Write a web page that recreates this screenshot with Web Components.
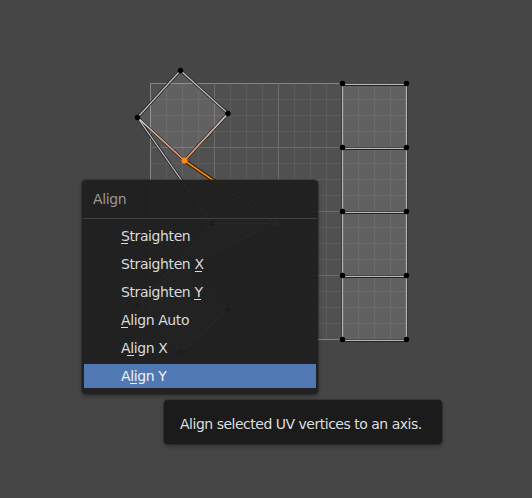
<!DOCTYPE html>
<html lang="en"><head><meta charset="utf-8"><title>UV Editor</title>
<style>html,body{margin:0;width:532px;height:498px;overflow:hidden;background:#464646}</style></head>
<body>
<uv-editor>
<uv-menu heading="Align">
<menu-entry key="0">Straighten</menu-entry>
<menu-entry key="11">Straighten X</menu-entry>
<menu-entry key="12">Straighten Y</menu-entry>
<menu-entry key="0">Align Auto</menu-entry>
<menu-entry key="1">Align X</menu-entry>
<menu-entry key="2" active>Align Y</menu-entry>
</uv-menu>
<tool-tip>Align selected UV vertices to an axis.</tool-tip>
</uv-editor>
<script>
customElements.define('uv-canvas', class extends HTMLElement {
  connectedCallback() {
    const root = this.attachShadow({mode: 'open'});
    let grid = '';
    for (let i = 0; i <= 16; i++) {
      const p = i * 16, c = i % 16 === 0 ? '#858585' : i % 4 === 0 ? '#6c6c6c' : '#5c5c5c';
      const s = `<path stroke="${c}" d="M${150.5 + p} 83V340M150 ${83.5 + p}H407"/>`;
      grid = i % 4 === 0 ? grid + s : s + grid;
    }
    const faces = ['180.5 70.5 228 113.5 184.5 160.5 137.5 117.5', '137.5 117.5 184.5 160.5 276 223.5 212 223.5',
      '212 223.5 276 223.5 181 266 137.5 306', '181 266 228 309.5 181 352 137.5 306'];
    const edges = 'M184.5 160.5L137.5 117.5L180.5 70.5L228 113.5L184.5 160.5M137.5 117.5L212 223.5H276L181 266L228 309.5L181 352L137.5 306L212 223.5M181 266L137.5 306';
    const right = 'M342.5 83.5V339.5M406.5 83.5V339.5';
    const rows = [84.5, 148.5, 212.5, 276.5, 340.5];
    const pts = [[180.5,70.5],[228,113.5],[137.5,117.5],[212,223.5],[137.5,306],[228,309.5],[181,352]];
    for (let y = 0; y < 5; y++) pts.push([342.5, 83.5 + y * 64], [406.5, 83.5 + y * 64]);
    root.innerHTML = `<style>:host{display:block;width:532px;height:498px}svg{display:block}</style>
    <svg width="532" height="498" fill="none">
      <defs>
        <linearGradient id="a" gradientUnits="userSpaceOnUse" x1="184.5" y1="160.5" x2="137.5" y2="117.5"><stop stop-color="#ee8048"/><stop offset="1" stop-color="#c4c4c4"/></linearGradient>
        <linearGradient id="b" gradientUnits="userSpaceOnUse" x1="184.5" y1="160.5" x2="228" y2="113.5"><stop stop-color="#ee8048"/><stop offset="1" stop-color="#c4c4c4"/></linearGradient>
      </defs>
      <path fill="#505050" d="M150 83h257v257H150z"/>${grid}
      <path fill="#fff" fill-opacity=".1" d="M342 83h65v257h-65z"/>
      ${faces.map((f, i) => `<polygon points="${f}" fill="#fff" fill-opacity="${i === 1 ? .03 : .1}"/>`).join('')}
      <path d="${edges}" stroke="#242424" stroke-width="3"/>
      <path d="${edges}" stroke="#bcbcbc" stroke-width="1.3"/>
      <path d="M184.5 160.5L137.5 117.5" stroke="url(#a)" stroke-width="1.3"/>
      <path d="M184.5 160.5L228 113.5" stroke="url(#b)" stroke-width="1.3"/>
      <path d="M184.5 160.5L276 223.5" stroke="#281600" stroke-width="3.6"/>
      <path d="M184.5 160.5L276 223.5" stroke="#f28a14" stroke-width="1.6"/>
      <path d="M341.5 84V340M407.5 84V340" stroke="#3a3a3a"/>
      <path d="M343.5 84V340M405.5 84V340" stroke="#6c6c6c"/>
      <path d="${right}" stroke="#b4b4b4"/>
      ${rows.map(y => `<path d="M342 ${y + 1}H407" stroke="#222"/><path d="M342 ${y - 1}H407" stroke="#484848"/><path d="M342 ${y}H407" stroke="#b8b8b8"/>`).join('')}
      ${pts.map(p => `<circle cx="${p[0]}" cy="${p[1]}" r="2.7" fill="#000"/>`).join('')}
      <circle cx="184.5" cy="160.5" r="3" fill="#ff8a14"/><circle cx="276" cy="223.5" r="3" fill="#ff8a14"/>
    </svg>`;
  }
});
customElements.define('uv-menu', class extends HTMLElement {
  connectedCallback() {
    this.attachShadow({mode: 'open'}).innerHTML = `<style>
      :host{display:block;box-sizing:border-box;width:236px;height:214px;padding:0 2px;background:rgba(31,31,31,.945);border-radius:4px;box-shadow:0 0 0 1px rgba(24,24,24,.3),0 2px 4px rgba(0,0,0,.35);color:#dadada}
      header{height:38px;line-height:38px;padding-left:10px;margin:0 -1px 4px;color:#989898;border-bottom:1px solid #424242}
      nav{display:flex;flex-direction:column;gap:4px;padding-top:1px}</style>
      <header>${this.getAttribute('heading')}</header><nav><slot></slot></nav>`;
  }
});
customElements.define('menu-entry', class extends HTMLElement {
  connectedCallback() {
    const k = +this.getAttribute('key'), t = this.textContent;
    const x = {0: 0, 1: 6, 2: 9, 11: 74, 12: 73}[k];
    this.attachShadow({mode: 'open'}).innerHTML = `<style>
      :host{display:block;height:24px;line-height:24px;padding-left:37px;white-space:pre}
      :host([active]){background:#5079b4;color:#f0f0f0}
      span{display:inline-block;min-width:90px;background:linear-gradient(currentColor,currentColor) 0 19px/7px 1px no-repeat}
      </style><span style="background-position-x:${x}px">${t}</span>`;
  }
});
customElements.define('tool-tip', class extends HTMLElement {
  connectedCallback() {
    this.attachShadow({mode: 'open'}).innerHTML = `<style>
      :host{display:block;box-sizing:border-box;width:278px;height:44px;line-height:48px;padding-left:16px;white-space:nowrap;background:#1b1b1c;border-radius:4px;color:#dedede;letter-spacing:-.49px;box-shadow:0 0 0 1px rgba(24,24,24,.3),0 2px 4px rgba(0,0,0,.35)}
      </style><slot></slot>`;
  }
});
customElements.define('uv-editor', class extends HTMLElement {
  connectedCallback() {
    this.attachShadow({mode: 'open'}).innerHTML = `<style>
      :host{display:block;position:relative;width:532px;height:498px;font:14px "DejaVu Sans",sans-serif;letter-spacing:-.4px}
      ::slotted(uv-menu){position:absolute;left:82px;top:180px}
      ::slotted(tool-tip){position:absolute;left:164px;top:400px}
      </style><uv-canvas></uv-canvas><slot></slot>`;
  }
});
</script>
</body></html>
